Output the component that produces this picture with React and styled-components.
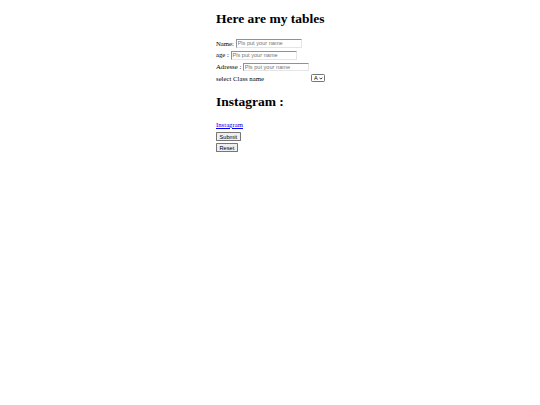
import React from "react";
import styled, { createGlobalStyle } from "styled-components";

const GlobalStyle = createGlobalStyle`
  html, body {
    margin: 0;
    background: #ffffff;
  }
  body {
    font-family: "Liberation Serif", "Times New Roman", serif;
    color: #000000;
  }
`;

// the reference is a 1280px wide page shot down to 540px
const Page = styled.div`
  zoom: 0.421875;
  padding: 6px 0 8px 512px;
  width: 1280px;
  box-sizing: border-box;
`;

const Title = styled.h1`
  font-size: 32px;
  font-weight: bold;
  margin: 21px 0 24px;
`;

const Form = styled.form`
  font-size: 16px;
  line-height: 1.15;
`;

const Row = styled.div`
  display: flex;
  align-items: center;
  height: ${(p) => p.$h || 28}px;
`;

const Field = styled.input`
  font-family: "Liberation Sans", Arial, sans-serif;
  font-size: 13.33px;
  width: 148px;
  margin-left: 4px;
  padding: 1px 2px;
  border: 2px inset #e5e5e5;
  border-radius: 2px;
  &::placeholder {
    color: #757575;
  }
`;

const SelectBox = styled.div`
  position: relative;
  margin-left: 112px;
  display: inline-flex;
`;

const Select = styled.select`
  appearance: none;
  font-family: "Liberation Sans", Arial, sans-serif;
  font-size: 13.33px;
  color: #000;
  background: #ffffff;
  border: 1px solid #767676;
  border-radius: 3px;
  width: 32px;
  height: 19px;
  padding: 0 0 0 4px;
`;

const Chevron = styled.svg`
  position: absolute;
  right: 4px;
  top: 6px;
  width: 9px;
  height: 7px;
  pointer-events: none;
`;

const SubTitle = styled.h1`
  font-size: 32px;
  font-weight: bold;
  margin: 23px 0 28px;
`;

const LinkLine = styled.div`
  height: 26px;
`;

const Link = styled.a`
  color: #0000ee;
  text-decoration: underline;
  font-size: 16px;
`;

const Button = styled.button`
  display: block;
  font-family: "Liberation Sans", Arial, sans-serif;
  font-size: 13.33px;
  color: #000;
  background: #efefef;
  border: 1px solid #767676;
  border-radius: 2px;
  height: 22px;
  margin-bottom: 4px;
  padding: 1px 6px;
`;

const App = () => (
  <>
    <GlobalStyle />
    <Page>
      <Title>Here are my tables</Title>
      <Form>
        <Row>
          Name:
          <Field placeholder="Pls put your name" />
        </Row>
        <Row>
          age :
          <Field placeholder="Pls put your name" />
        </Row>
        <Row>
          Adresse :
          <Field placeholder="Pls put your name" />
        </Row>
        <Row $h={26}>
          select Class name
          <SelectBox>
            <Select defaultValue="A">
              <option value="A">A</option>
              <option value="B">B</option>
            </Select>
            <Chevron viewBox="0 0 9 7">
              <path d="M1 1.5 L4.5 5 L8 1.5" fill="none" stroke="#000" strokeWidth="1.8" />
            </Chevron>
          </SelectBox>
        </Row>
        <SubTitle>Instagram :</SubTitle>
        <LinkLine>
          <Link href="#">Instagram</Link>
        </LinkLine>
        <Button type="submit">Submit</Button>
        <Button type="reset">Reset</Button>
      </Form>
    </Page>
  </>
);

export default App;
